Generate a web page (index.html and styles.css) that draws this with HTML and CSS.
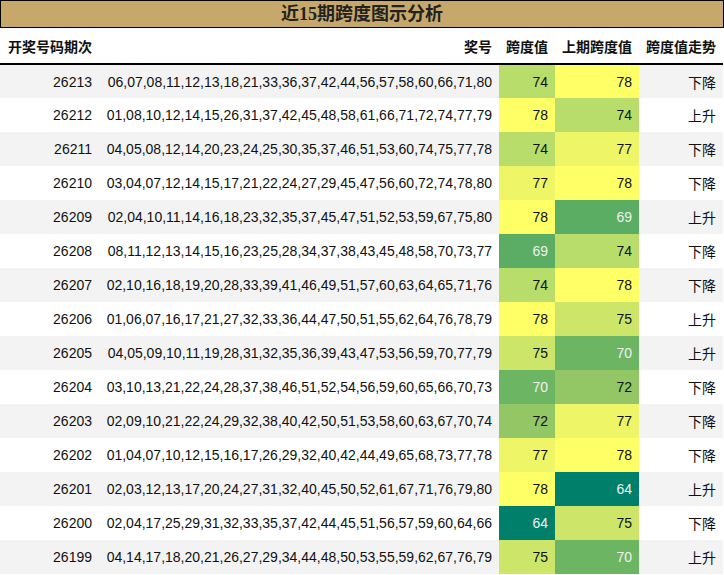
FILE: index.html
```html
<!DOCTYPE html>
<html lang="zh-CN">
<head>
<meta charset="utf-8">
<title>近15期跨度图示分析</title>
<link rel="stylesheet" href="styles.css">
</head>
<body>
<div class="title">近15期跨度图示分析</div>
<table class="grid">
<thead>
<tr><th class="c-issue">开奖号码期次</th><th class="c-nums">奖号</th><th class="c-span">跨度值</th><th class="c-prev">上期跨度值</th><th class="c-trend">跨度值走势</th></tr>
</thead>
<tbody>
<tr><td>26213</td><td>06,07,08,11,12,13,18,21,33,36,37,42,44,56,57,58,60,66,71,80</td><td class="v74">74</td><td class="v78">78</td><td>下降</td></tr>
<tr><td>26212</td><td>01,08,10,12,14,15,26,31,37,42,45,48,58,61,66,71,72,74,77,79</td><td class="v78">78</td><td class="v74">74</td><td>上升</td></tr>
<tr><td>26211</td><td>04,05,08,12,14,20,23,24,25,30,35,37,46,51,53,60,74,75,77,78</td><td class="v74">74</td><td class="v77">77</td><td>下降</td></tr>
<tr><td>26210</td><td>03,04,07,12,14,15,17,21,22,24,27,29,45,47,56,60,72,74,78,80</td><td class="v77">77</td><td class="v78">78</td><td>下降</td></tr>
<tr><td>26209</td><td>02,04,10,11,14,16,18,23,32,35,37,45,47,51,52,53,59,67,75,80</td><td class="v78">78</td><td class="v69">69</td><td>上升</td></tr>
<tr><td>26208</td><td>08,11,12,13,14,15,16,23,25,28,34,37,38,43,45,48,58,70,73,77</td><td class="v69">69</td><td class="v74">74</td><td>下降</td></tr>
<tr><td>26207</td><td>02,10,16,18,19,20,28,33,39,41,46,49,51,57,60,63,64,65,71,76</td><td class="v74">74</td><td class="v78">78</td><td>下降</td></tr>
<tr><td>26206</td><td>01,06,07,16,17,21,27,32,33,36,44,47,50,51,55,62,64,76,78,79</td><td class="v78">78</td><td class="v75">75</td><td>上升</td></tr>
<tr><td>26205</td><td>04,05,09,10,11,19,28,31,32,35,36,39,43,47,53,56,59,70,77,79</td><td class="v75">75</td><td class="v70">70</td><td>上升</td></tr>
<tr><td>26204</td><td>03,10,13,21,22,24,28,37,38,46,51,52,54,56,59,60,65,66,70,73</td><td class="v70">70</td><td class="v72">72</td><td>下降</td></tr>
<tr><td>26203</td><td>02,09,10,21,22,24,29,32,38,40,42,50,51,53,58,60,63,67,70,74</td><td class="v72">72</td><td class="v77">77</td><td>下降</td></tr>
<tr><td>26202</td><td>01,04,07,10,12,15,16,17,26,29,32,40,42,44,49,65,68,73,77,78</td><td class="v77">77</td><td class="v78">78</td><td>下降</td></tr>
<tr><td>26201</td><td>02,03,12,13,17,20,24,27,31,32,40,45,50,52,61,67,71,76,79,80</td><td class="v78">78</td><td class="v64">64</td><td>上升</td></tr>
<tr><td>26200</td><td>02,04,17,25,29,31,32,33,35,37,42,44,45,51,56,57,59,60,64,66</td><td class="v64">64</td><td class="v75">75</td><td>下降</td></tr>
<tr><td>26199</td><td>04,14,17,18,20,21,26,27,29,34,44,48,50,53,55,59,62,67,76,79</td><td class="v75">75</td><td class="v70">70</td><td>上升</td></tr>
</tbody>
</table>
</body>
</html>
```
FILE: styles.css
```css
html, body {
  margin: 0;
  padding: 0;
  background: #ffffff;
}
body {
  font-family: "Liberation Sans", "Noto Sans CJK SC", sans-serif;
  font-size: 14px;
  color: #111;
}
.title {
  box-sizing: border-box;
  width: 724px;
  height: 28px;
  border: 1px solid #000;
  background: #c6a96a;
  font-family: "Liberation Serif", "Noto Sans CJK SC", serif;
  font-weight: bold;
  font-size: 18px;
  line-height: 26px;
  text-align: center;
  color: #222;
}
.grid {
  width: 723px;
  border-collapse: collapse;
  table-layout: fixed;
}
.grid th, .grid td {
  box-sizing: border-box;
  padding: 0 7px 0 4px;
  text-align: right;
  white-space: nowrap;
  height: 34px;
}
.grid th {
  font-weight: bold;
  height: 36px;
  border-bottom: 2px solid #000;
}
.grid th.c-issue {
  text-align: left;
  padding-left: 8px;
}
.c-issue { width: 99px; }
.c-nums { width: 400px; }
.c-span { width: 56px; }
.c-prev { width: 84px; }
.c-trend { width: 84px; }
.grid tbody tr:nth-child(odd) { background: #f3f3f3; }
.grid tbody tr:nth-child(even) { background: #ffffff; }
.v78 { background: #ffff66; }
.v77 { background: #eef566; }
.v75 { background: #cde66a; }
.v74 { background: #b8dd6b; }
.v72 { background: #93c765; }
.v70 { background: #6cb663; color: #f0f0f0; }
.v69 { background: #5aad63; color: #f0f0f0; }
.v64 { background: #00806a; color: #f0f0f0; }
```
